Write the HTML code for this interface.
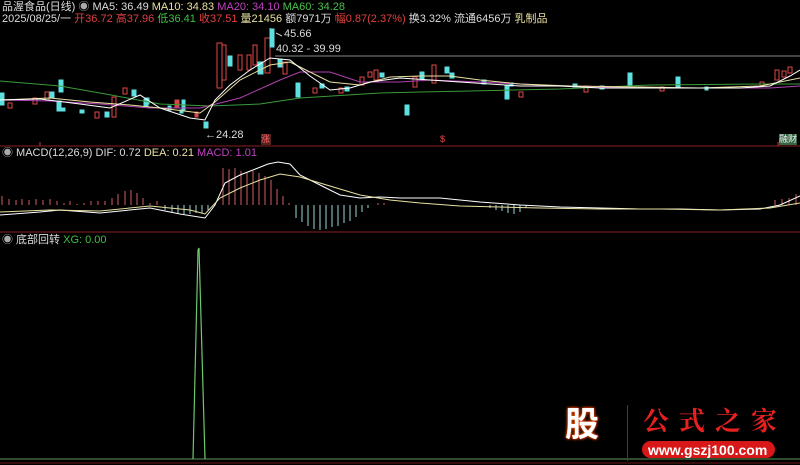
<!DOCTYPE html>
<html><head><meta charset="utf-8"><style>
body{margin:0;background:#000;width:800px;height:465px;overflow:hidden;font-family:"Liberation Sans","Noto Sans CJK SC",sans-serif;font-size:11px;}
.t{position:absolute;white-space:nowrap;line-height:13px}
</style></head><body>
<svg width="800" height="465" style="position:absolute;left:0;top:0">
<line x1="0" y1="146" x2="800" y2="146" stroke="#8a2020" stroke-width="1"/>
<line x1="0" y1="232" x2="800" y2="232" stroke="#8a2020" stroke-width="1"/>
<line x1="0" y1="463" x2="800" y2="463" stroke="#6a1a1a" stroke-width="1"/>
<line x1="275" y1="56" x2="800" y2="56" stroke="#888" stroke-width="1"/>
<line x1="270" y1="28" x2="270" y2="41" stroke="#7ff" stroke-width="1"/>
<polyline points="282,36 276,33" stroke="#ccc" fill="none"/>
<line x1="40" y1="142" x2="40" y2="146" stroke="#c33"/><line x1="778" y1="142" x2="778" y2="146" stroke="#c33"/>
<g stroke-width="1">
<g fill="#000" stroke="#e04848">
<rect x="8" y="103" width="4" height="5"/><rect x="33" y="98" width="4" height="6"/><rect x="45" y="92" width="4" height="8"/><rect x="95" y="112" width="4" height="6"/><rect x="112" y="97" width="4" height="20"/><rect x="123" y="88" width="4" height="6"/>
<rect x="217" y="43" width="5" height="45"/><rect x="222" y="45" width="4" height="35"/><rect x="238" y="55" width="4" height="15"/><rect x="247" y="55" width="4" height="15"/><rect x="253" y="45" width="4" height="20"/><rect x="265" y="38" width="5" height="35"/><rect x="283" y="62" width="4" height="12"/>
<rect x="313" y="88" width="4" height="5"/><rect x="339" y="88" width="4" height="5"/><rect x="360" y="77" width="4" height="8"/><rect x="368" y="72" width="4" height="5"/><rect x="374" y="70" width="4" height="10"/>
<rect x="413" y="77" width="4" height="10"/><rect x="432" y="65" width="4" height="18"/><rect x="519" y="92" width="4" height="5"/><rect x="584" y="86" width="4" height="6"/><rect x="660" y="87" width="4" height="4"/><rect x="760" y="82" width="4" height="4"/><rect x="775" y="70" width="4" height="10"/><rect x="782" y="71" width="4" height="6"/><rect x="788" y="67" width="4" height="6"/>
</g>
<g fill="#5ee0e0" stroke="#5ee0e0">
<rect x="0" y="93" width="4" height="12"/><rect x="50" y="92" width="4" height="6"/><rect x="57" y="101" width="4" height="10"/><rect x="62" y="108" width="3" height="3"/><rect x="80" y="110" width="4" height="3"/><rect x="105" y="112" width="4" height="5"/><rect x="132" y="90" width="4" height="6"/><rect x="144" y="99" width="4" height="7"/>
<rect x="228" y="56" width="4" height="10"/><rect x="258" y="62" width="5" height="12"/><rect x="270" y="29" width="4" height="18"/><rect x="278" y="59" width="4" height="8"/><rect x="296" y="83" width="4" height="14"/><rect x="320" y="84" width="4" height="4"/><rect x="345" y="87" width="4" height="4"/><rect x="380" y="73" width="4" height="4"/>
<rect x="405" y="105" width="4" height="10"/><rect x="420" y="72" width="4" height="7"/><rect x="445" y="67" width="4" height="6"/><rect x="450" y="73" width="4" height="5"/><rect x="482" y="80" width="4" height="4"/><rect x="505" y="85" width="4" height="14"/><rect x="510" y="83" width="3" height="3"/><rect x="573" y="84" width="4" height="3"/><rect x="600" y="86" width="4" height="3"/><rect x="628" y="73" width="4" height="12"/><rect x="676" y="77" width="4" height="10"/><rect x="705" y="87" width="3" height="3"/>
</g>
<g fill="#d04848" stroke="#d04848"><rect x="175" y="100" width="4" height="8"/><rect x="195" y="112" width="3" height="5"/></g>
<g fill="#5ee0e0" stroke="#5ee0e0"><rect x="59" y="80" width="4" height="12"/><rect x="145" y="98" width="4" height="6"/><rect x="168" y="106" width="3" height="4"/><rect x="180" y="110" width="3" height="3"/><rect x="204" y="122" width="4" height="6"/><rect x="182" y="100" width="3" height="10"/></g>
</g>
<polyline fill="none" stroke="#3a9a3a" points="0,81 60,86 100,93 160,104 210,106 260,104 300,98 380,93 420,92 470,91 560,89 650,85 760,84 800,84"/>
<polyline fill="none" stroke="#b040b0" points="0,100 50,101 100,104 150,108 200,108 240,98 280,80 300,72 330,72 360,82 400,82 430,80 480,82 560,86 640,88 720,88 770,88 800,86"/>
<polyline fill="none" stroke="#e8e0a0" points="0,100 50,98 90,102 130,105 160,108 200,113 215,102 240,80 270,65 290,62 310,72 330,82 360,85 390,77 420,76 450,76 480,80 520,84 570,86 640,87 700,88 760,86 800,78"/>
<polyline fill="none" stroke="#fff" points="0,100 40,99 80,104 110,108 140,95 160,108 190,118 205,120 215,100 230,85 250,70 270,58 290,60 310,76 330,90 350,88 370,82 400,78 430,80 460,82 490,84 520,86 560,86 600,88 660,88 700,88 740,88 770,86 790,76 800,70"/>
<g stroke="#d06060" stroke-width="1">
<path d="M2 196V205M9 199V205M16 200V205M22 199V205M29 200V205M36 199V205M43 200V205M50 199V205M57 201V205M64 203V205M70 201V205M77 204V205M84 203V205M91 201V205M98 201V205M105 201V205M112 198V205M118 194V205M125 191V205M131 190V205M137 193V205M143 198V205M150 203V205M157 201V205"/>
<path d="M223 168V205M229 169V205M235 168V205M241 171V205M247 173V205M253 171V205M259 173V205M265 176V205M271 180V205M277 189V205M283 196V205M289 203V205"/>
<path d="M378 203V205M384 203V205M775 200V205M782 199V205M789 198V205M796 194V205"/>
</g>
<g stroke="#9ad8d8" stroke-width="1">
<path d="M165 205V210M172 205V212M178 205V213M184 205V214M190 205V214M196 205V213M202 205V213M208 205V210"/>
<path d="M296 205V218M302 205V222M308 205V226M314 205V229M320 205V230M326 205V229M332 205V227M338 205V226M344 205V223M350 205V221M356 205V217M362 205V212M368 205V208M490 205V208M496 205V210M502 205V211M508 205V213M514 205V214M520 205V212M526 205V208M532 205V206"/>
</g>
<polyline fill="none" stroke="#fff" points="0,215 40,212 60,210 100,213 150,208 180,214 205,218 215,205 225,183 240,175 258,168 268,164 278,162 290,164 300,175 320,185 340,195 360,198 380,197 400,198 440,198 480,202 520,205 560,207 600,208 640,209 680,209 720,210 760,209 780,205 800,196"/>
<polyline fill="none" stroke="#e8e0a0" points="0,212 50,210 100,211 150,206 190,210 205,214 220,198 240,188 260,180 280,174 300,177 320,183 340,189 360,195 390,200 420,203 460,206 500,207 540,208 600,209 660,209 720,210 770,208 800,203"/>
<line x1="0" y1="459" x2="800" y2="459" stroke="#5a9a5a" stroke-width="1"/>
<polyline fill="none" stroke="#6ec86e" stroke-width="1.2" points="193,459 198,250 199,248 205,459"/>
</svg>
<div class="t" style="left:2px;top:1px;color:#ddd">品渥食品(日线) <span style="color:#aaa">◉</span> MA5: 36.49 <span style="color:#e8e0a0">MA10: 34.83</span> <span style="color:#c040c0">MA20: 34.10</span> <span style="color:#4ac04a">MA60: 34.28</span></div>
<div class="t" style="left:2px;top:13px;color:#ddd">2025/08/25/一 <span style="color:#e04040">开36.72 高37.96</span> <span style="color:#40c040">低36.41</span> <span style="color:#e04040">收37.51</span> <span style="color:#e8e0a0">量21456</span> 额7971万 <span style="color:#e04040">幅0.87(2.37%)</span> 换3.32% 流通6456万 <span style="color:#e8e0a0">乳制品</span></div>
<div class="t" style="left:284px;top:28px;color:#ddd">45.66</div>
<div class="t" style="left:276px;top:43px;color:#ddd">40.32 - 39.99</div>
<div class="t" style="left:205px;top:129px;color:#ddd">←24.28</div>
<div class="t" style="left:261px;top:134px;width:10px;height:11px;overflow:hidden;color:#f66;background:#522;font-size:9px;line-height:11px">涨</div>
<div class="t" style="left:440px;top:134px;color:#e44;font-size:9px;line-height:11px">$</div>
<div class="t" style="left:779px;top:134px;width:18px;height:11px;overflow:hidden;color:#eee;background:#364;font-size:9px;line-height:11px">融财</div>
<div class="t" style="left:2px;top:147px;color:#ddd"><span style="color:#aaa">◉</span> MACD(12,26,9) DIF: 0.72 <span style="color:#e8e0a0">DEA: 0.21</span> <span style="color:#c040c0">MACD: 1.01</span></div>
<div class="t" style="left:2px;top:234px;color:#ddd"><span style="color:#aaa">◉</span> 底部回转 <span style="color:#40c040">XG: 0.00</span></div>
<div class="t" style="left:565px;top:405px;color:#fff;font-size:34px;line-height:40px;font-weight:bold;text-shadow:0 0 3px #f60,0 0 2px #f00">股</div>
<div style="position:absolute;left:627px;top:405px;width:1px;height:56px;background:#822"></div>
<div class="t" style="left:643px;top:405px;color:#e82020;font-size:26px;line-height:30px;letter-spacing:10px;font-family:'Noto Serif CJK SC',serif;font-weight:bold">公式之家</div>
<div style="position:absolute;left:642px;top:441px;width:133px;height:17px;background:#d81818;border-radius:9px"></div>
<div class="t" style="left:648px;top:442px;color:#fff;font-size:14px;line-height:16px;font-weight:bold">www.gszj100.com</div>
</body></html>
